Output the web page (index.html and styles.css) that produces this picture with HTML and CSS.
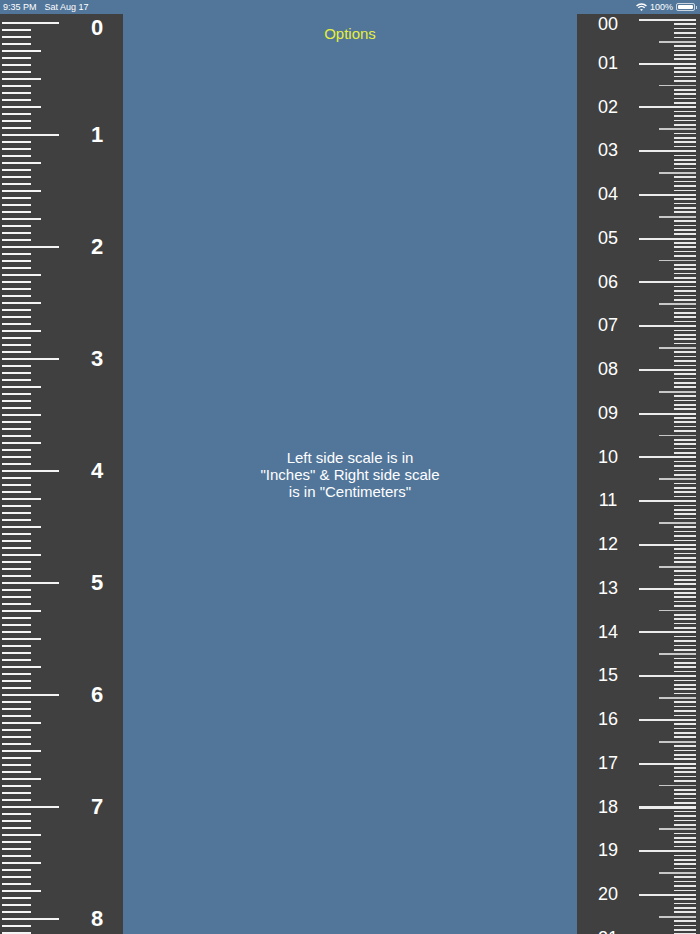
FILE: index.html
```html
<!DOCTYPE html>
<html>
<head>
<meta charset="utf-8">
<link rel="stylesheet" href="styles.css">
</head>
<body>
<div class="status">
  <div class="status-left"><span>9:35 PM</span><span class="date">Sat Aug 17</span></div>
  <div class="status-right">
    <svg class="wifi" width="11" height="8" viewBox="0 0 11 8">
      <path d="M0.55 3.05 A7 7 0 0 1 10.45 3.05" fill="none" stroke="#fff" stroke-width="1.4"/>
      <path d="M2.32 4.82 A4.5 4.5 0 0 1 8.68 4.82" fill="none" stroke="#fff" stroke-width="1.4"/>
      <path d="M5.5 8 L4.09 6.59 A2 2 0 0 1 6.91 6.59 Z" fill="#fff"/>
    </svg>
    <span class="pct">100%</span>
    <span class="battery"><span class="battery-fill"></span></span><span class="battery-nub"></span>
  </div>
</div>
<div class="main">
  <div class="ruler ruler-in">
    <div class="ticks-in"></div>
    <div class="labels-in">
      <span class="first">0</span><span>1</span><span>2</span><span>3</span><span>4</span><span>5</span><span>6</span><span>7</span><span>8</span>
    </div>
  </div>
  <div class="center">
    <div class="options">Options</div>
    <p class="info">Left side scale is in<br>"Inches" &amp; Right side scale<br>is in "Centimeters"</p>
  </div>
  <div class="ruler ruler-cm">
    <div class="labels-cm">
      <span class="first">00</span><span>01</span><span>02</span><span>03</span><span>04</span><span>05</span><span>06</span><span>07</span><span>08</span><span>09</span><span>10</span><span>11</span><span>12</span><span>13</span><span>14</span><span>15</span><span>16</span><span>17</span><span>18</span><span>19</span><span>20</span><span>21</span>
    </div>
    <div class="ticks-cm"></div>
  </div>
</div>
</body>
</html>
```
FILE: styles.css
```css
html, body {
  margin: 0;
  padding: 0;
}
body {
  width: 700px;
  height: 934px;
  overflow: hidden;
  background: #52769a;
  font-family: "Liberation Sans", Arial, sans-serif;
}
.status {
  height: 14px;
  display: flex;
  justify-content: space-between;
  align-items: center;
  padding: 0 3px 0 3px;
  color: #fff;
  font-size: 9px;
  line-height: 14px;
}
.status-left {
  display: flex;
}
.date {
  margin-left: 8px;
}
.status-right {
  display: flex;
  align-items: center;
}
.wifi {
  display: block;
  margin-right: 3px;
}
.pct {
  margin-right: 3px;
}
.battery {
  display: flex;
  width: 15px;
  height: 4px;
  border: 1px solid rgba(255,255,255,0.7);
  border-radius: 2px;
  padding: 1px;
  box-sizing: content-box;
}
.battery-fill {
  flex: 1;
  background: #fff;
  border-radius: 1px;
}
.battery-nub {
  width: 1px;
  height: 3px;
  background: rgba(255,255,255,0.7);
  margin-left: 1px;
}
.main {
  display: flex;
  height: 920px;
}
.ruler {
  flex: none;
  width: 123px;
  height: 920px;
  background: #404040;
  display: flex;
  overflow: hidden;
}
.ticks-in {
  flex: none;
  width: 57px;
  margin: 8px 0 0 2px;
  background:
    repeating-linear-gradient(to bottom, #f4f4f4 0 2px, transparent 2px 112px) 0 0 / 57px 100% no-repeat,
    repeating-linear-gradient(to bottom, #f4f4f4 0 2px, transparent 2px 28px) 0 0 / 39px 100% no-repeat,
    repeating-linear-gradient(to bottom, #f4f4f4 0 2px, transparent 2px 7px) 0 0 / 29px 100% no-repeat;
}
.labels-in {
  flex: none;
  width: 44px;
  margin-left: 16px;
  display: flex;
  flex-direction: column;
  color: #fff;
  font-weight: bold;
  font-size: 22px;
  text-align: center;
}
.labels-in span {
  flex: none;
  height: 112px;
  line-height: 112px;
}
.labels-in .first {
  height: 65px;
  line-height: 27px;
}
.center {
  flex: 1;
  display: grid;
  grid-template-rows: 1fr auto 1fr;
  justify-items: center;
}
.options {
  align-self: start;
  margin-top: 11px;
  color: #e6ef3c;
  font-size: 15px;
  line-height: 18px;
}
.info {
  grid-row: 2;
  margin: 0;
  color: #fff;
  font-size: 15px;
  line-height: 17px;
  text-align: center;
}
.labels-cm {
  flex: none;
  width: 40px;
  margin-left: 11px;
  display: flex;
  flex-direction: column;
  color: #fff;
  font-size: 18px;
  text-align: center;
}
.labels-cm span {
  flex: none;
  height: 43.75px;
  line-height: 43.75px;
}
.labels-cm .first {
  height: 27.875px;
  line-height: 20px;
}
.ticks-cm {
  flex: none;
  width: 57px;
  margin: 5px 0 0 11px;
  background:
    repeating-linear-gradient(to bottom, #ececec 0 2px, transparent 2px 43.75px) 0 0 / 57px 100% no-repeat,
    repeating-linear-gradient(to bottom, #c8c8c8 0 1.6px, transparent 1.6px 43.75px) right 0 top 21.875px / 37px 100% no-repeat,
    repeating-linear-gradient(to bottom, #e8e8e8 0 1.6px, transparent 1.6px 4.375px) right 0 top 0 / 22px 100% no-repeat;
}
```
